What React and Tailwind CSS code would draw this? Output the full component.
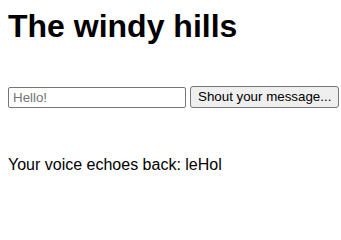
import React, { useState } from 'react';

function App() {
  const [message, setMessage] = useState('');
  const [echo, setEcho] = useState('leHol');

  const shout = () => {
    if (message) setEcho(message.split('').reverse().join(''));
  };

  return (
    <div className="p-2 font-['Liberation_Sans',Arial,sans-serif] text-black bg-white">
      <h1 className="text-[32px] font-bold leading-[37px]">The windy hills</h1>

      {/* Input row */}
      <div className="mt-[41px] flex items-center gap-1">
        <input
          type="text"
          value={message}
          onChange={(e) => setMessage(e.target.value)}
          placeholder="Hello!"
          className="w-[178px] shrink-0 h-[21px] px-[4px] border border-[#767676] rounded-[2px] text-[13.33px] bg-white placeholder:text-[#757575] outline-none"
        />
        <button
          onClick={shout}
          className="h-[22px] shrink-0 whitespace-nowrap px-[7px] border border-[#767676] rounded-[3px] bg-[#efefef] text-[13.33px] text-black"
        >
          Shout your message...
        </button>
      </div>

      <p className="mt-[48px] text-[16px] leading-[18px]">Your voice echoes back: {echo}</p>
    </div>
  );
}

export default App;
